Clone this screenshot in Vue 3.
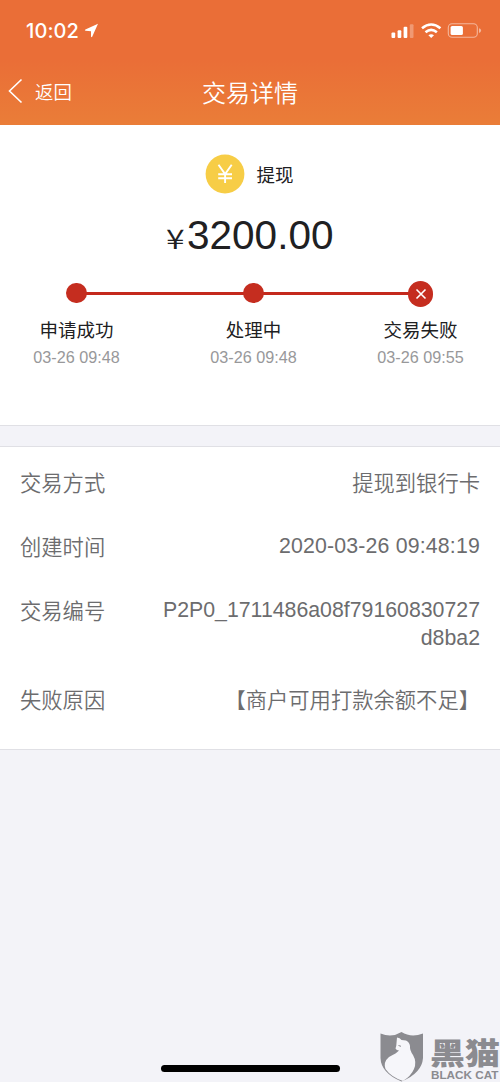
<script setup>
const steps = [
  { label: '申请成功', time: '03-26 09:48', state: 'done' },
  { label: '处理中', time: '03-26 09:48', state: 'done' },
  { label: '交易失败', time: '03-26 09:55', state: 'failed' },
]
const details = [
  { label: '交易方式', value: '提现到银行卡' },
  { label: '创建时间', value: '2020-03-26 09:48:19', kind: 'date' },
  { label: '交易编号', value: 'P2P0_1711486a08f79160830727d8ba2', kind: 'long' },
  { label: '失败原因', value: '【商户可用打款余额不足】' },
]
</script>

<template>
  <div class="screen">
    <header class="header">
      <div class="status">
        <span class="clock">10:02</span>
        <svg class="location" width="15" height="15" viewBox="0 0 15 15">
          <path d="M14 .8 8.2 13.8Q7.3 14.8 7 13.3V8.2L1.6 7.8Q.1 7.4 1.4 6.5Z" fill="#fff" />
        </svg>
        <svg class="indicators" width="92" height="18" viewBox="0 0 92 18">
          <g fill="#fff">
            <rect x="1.500" y="10.500" width="3.7" height="5.500" rx="1" />
            <rect x="7.6" y="8.300" width="3.7" height="7.700" rx="1" />
            <rect x="13.6" y="4.8" width="3.7" height="11.2" rx="1" />
            <rect x="19.8" y="2.200" width="3.7" height="13.8" rx="1" opacity=".3" />
            <path d="m41.200 16-2.8-2.8q2.8-2.1 5.6 0Z" />
          </g>
          <g fill="none" stroke="#fff" stroke-width="2.6">
            <path d="M32 6.3q9.2-7.6 18.4 0" />
            <path d="M35.500 10.2q5.7-4.8 11.4 0" />
          </g>
          <rect x="58.3" y="1.8" width="29" height="13.4" rx="3.8" fill="none" stroke="#fff" stroke-opacity=".5" stroke-width="1.1" />
          <rect x="60.6" y="4" width="12.3" height="9" rx="1.6" fill="#fff" />
          <path d="M89 6.3q2.1.5 2.1 2.3t-2.1 2.3Z" fill="#fff" opacity=".5" />
        </svg>
      </div>
      <nav class="nav">
        <div class="back">
          <svg width="15" height="26" viewBox="0 0 15 26">
            <path d="M13.5 1.5 1.5 13l12 11.5" fill="none" stroke="#fff" stroke-width="1.6" />
          </svg>
          <span>返回</span>
        </div>
        <h1 class="title">交易详情</h1>
      </nav>
    </header>

    <section class="summary">
      <div class="kind">
        <svg class="coin" width="40" height="40" viewBox="0 0 40 40">
          <circle cx="20" cy="20" r="19.4" fill="#f7cd46" />
          <path d="m13.500 10.8 6.6 9.2 6.6-9.2M20.1 20v9M13.2 20.3h13.8M13.2 24.3h13.8" fill="none" stroke="#fff" stroke-width="1.9" />
        </svg>
        <span>提现</span>
      </div>
      <div class="amount"><span class="currency">¥</span><span>3200.00</span></div>
      <div class="steps">
        <div v-for="step in steps" :key="step.label" class="step">
          <div class="marker">
            <i class="dot" :class="step.state">
              <svg v-if="step.state === 'failed'" width="12" height="12" viewBox="0 0 12 12">
                <path d="m1.5 1.5 9 9m0-9-9 9" stroke="#fff" stroke-width="1.6" />
              </svg>
            </i>
          </div>
          <span class="step-label">{{ step.label }}</span>
          <span class="step-time">{{ step.time }}</span>
        </div>
      </div>
    </section>

    <section class="details">
      <div v-for="row in details" :key="row.label" class="row" :class="row.kind">
        <span class="row-label">{{ row.label }}</span>
        <span class="row-value">{{ row.value }}</span>
      </div>
    </section>

    <div class="home-bar"></div>

    <svg class="brand" width="121" height="51" viewBox="0 0 121 51">
      <path d="M1.500 2.500Q13 7 22.500 1Q32 7 44 2.500V27Q43 42 22.500 50.500Q2 42 1.500 27Z" fill="#8b8b90" />
      <path d="M18 6.500Q21 6.500 22.500 9L27 9.500Q30.500 11 31 15Q30.500 19 34 24Q38 31 35 38Q32 45 24 50Q12 46 6.500 38Q4 31 10 26Q18 22 20 19.500Q17.500 19.500 16.500 17.500Q17.500 15 17.500 12Z" fill="#f6f6fa" />
      <path d="m19.500 14.500 2.500.8" stroke="#8b8b90" />
      <text class="brand-name" x="51" y="32.500" textLength="70" lengthAdjust="spacingAndGlyphs">黑猫</text>
      <text class="brand-latin" x="52" y="47.500" textLength="67.500" lengthAdjust="spacingAndGlyphs">BLACK CAT</text>
    </svg>
  </div>
</template>

<style>
body {
  margin: 0;
}
</style>

<style scoped>
.screen {
  position: relative;
  box-sizing: border-box;
  width: 500px;
  height: 1082px;
  overflow: hidden;
  background: #f3f3f8;
  font-family: "Liberation Sans", "Noto Sans CJK SC", sans-serif;
}
.header {
  height: 125px;
  color: #fff;
  background: linear-gradient(#ea6e37 0, #ea6e37 48%, #ea7d38 100%);
}
.status {
  display: flex;
  align-items: center;
  height: 61px;
  padding: 0 18px 0 26px;
}
.clock {
  font: 500 20px/24px Inter, sans-serif;
  letter-spacing: 0.1px;
}
.location {
  margin-left: 5px;
}
.indicators {
  margin-left: auto;
}
.nav {
  display: grid;
  grid-template-columns: 1fr auto 1fr;
  align-items: center;
  height: 60px;
}
.back {
  display: flex;
  align-items: center;
  gap: 12px;
  padding-left: 8px;
  font-size: 18.4px;
  font-weight: 350;
}
.title {
  margin: 5px 0 0;
  font-size: 24px;
  line-height: 34px;
  font-weight: 350;
}
.summary {
  box-sizing: border-box;
  height: 301px;
  padding-top: 29px;
  border-bottom: 1px solid #e0e0e5;
  background: #fff;
  color: #202022;
}
.kind {
  display: flex;
  align-items: center;
  justify-content: center;
  gap: 11px;
  height: 40px;
  padding-right: 1px;
  font-size: 18.500px;
}
.amount {
  display: flex;
  align-items: baseline;
  justify-content: center;
  height: 48px;
  margin-top: 17px;
  font-size: 40.500px;
  line-height: 48px;
}
.currency {
  display: inline-block;
  margin-right: 4px;
  transform: scale(1.13, 0.92);
  transform-origin: 50% 74%;
  font-family: "Noto Sans CJK SC", sans-serif;
  font-size: 30px;
  font-weight: 350;
}
.steps {
  display: grid;
  grid-template-columns: 87px 87px 87px;
  column-gap: 85px;
  padding-left: 33px;
  margin-top: 19px;
}
.step {
  display: flex;
  flex-direction: column;
  align-items: center;
}
.step:nth-child(2) {
  margin-left: 5px;
  margin-right: -5px;
}
.marker {
  position: relative;
  display: flex;
  align-items: center;
  justify-content: center;
  width: 100%;
  height: 30px;
}
.step:not(:last-child) .marker::after {
  content: "";
  position: absolute;
  left: 50%;
  top: 14px;
  width: 172px;
  height: 2.500px;
  background: #c4291c;
}
.step:first-child .marker::after {
  width: 177px;
}
.step:nth-child(2) .marker::after {
  width: 167px;
}
.dot {
  position: relative;
  z-index: 1;
  display: flex;
  align-items: center;
  justify-content: center;
  width: 20.500px;
  height: 20.500px;
  border-radius: 50%;
  background: #c52d1f;
}
.dot.failed {
  top: 1px;
  width: 25.500px;
  height: 25.500px;
}
.step-label {
  margin-top: 9px;
  font-size: 18.500px;
  line-height: 28px;
}
.step-time {
  margin-top: 2px;
  color: #98989a;
  font-size: 16.200px;
  line-height: 20px;
  white-space: nowrap;
}
.details {
  box-sizing: border-box;
  height: 304px;
  margin-top: 20px;
  padding: 4px 20px 0;
  border: solid #e0e0e5;
  border-width: 1px 0;
  background: #fff;
  color: #6c6c6e;
  font-size: 21.300px;
  font-weight: 350;
  line-height: 28px;
}
.row {
  display: flex;
  justify-content: space-between;
  box-sizing: border-box;
  height: 64px;
  padding-top: 19px;
}
.row.long {
  height: 89px;
}
.row-value {
  width: 320px;
  text-align: right;
  word-break: break-all;
}
.date .row-value,
.long .row-value {
  margin-top: -2px;
}
.date .row-value {
  letter-spacing: 0.17px;
}
.home-bar {
  position: absolute;
  left: 161px;
  bottom: 10px;
  width: 179px;
  height: 7px;
  border-radius: 4px;
  background: #000;
}
.brand {
  position: absolute;
  left: 379px;
  top: 1031px;
  overflow: visible;
}
.brand-name {
  fill: #8b8b90;
  font: 900 30px "Noto Sans CJK SC", sans-serif;
}
.brand-latin {
  fill: #8b8b90;
  font: 700 10px "Liberation Sans", sans-serif;
}
</style>
